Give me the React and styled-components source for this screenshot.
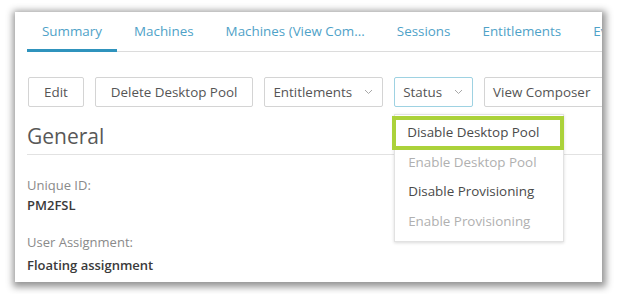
import styled, { createGlobalStyle } from 'styled-components';

const Global = createGlobalStyle`
  html, body {
    margin: 0;
    padding: 0;
    background: #ffffff;
    font-family: "Open Sans", "Noto Sans", sans-serif;
  }
`;

const Stage = styled.div`
  width: 618px;
  height: 294px;
  padding: 12px 16px 12px 15px;
  box-sizing: border-box;
`;

const Panel = styled.div`
  position: relative;
  height: 270px;
  background: #fff;
  overflow: hidden;
  box-shadow: 1px 2px 7px 3px rgba(0, 0, 0, 0.42);
  padding-left: 12px;
`;

const TabBar = styled.div`
  display: flex;
  gap: 2px;
  margin-top: 6px;
  border-bottom: 1px solid #dcdcdc;
  white-space: nowrap;
`;

const Tab = styled.div`
  flex: none;
  padding: 4px 15px 9px 15px;
  font-size: 13.4px;
  color: #4fa2c8;
  border-bottom: 3px solid ${(p) => (p.$active ? '#2f93bd' : 'transparent')};
  margin-bottom: -1px;
`;

const Toolbar = styled.div`
  display: flex;
  gap: 11px;
  margin-top: 25px;
  padding-left: 1px;
  white-space: nowrap;
`;

const Button = styled.div`
  flex: none;
  display: flex;
  align-items: center;
  gap: 12px;
  height: 30px;
  box-sizing: border-box;
  padding: 0 ${(p) => (p.$chevron ? '9px' : '15px')} 0 ${(p) => (p.$chevron ? '8px' : '15px')};
  border: 1px solid ${(p) => (p.$open ? '#9ed2e2' : '#d4d4d4')};
  border-radius: 2px;
  font-size: 13.4px;
  color: #555555;
  background: #fff;
`;

const DropWrap = styled.div`
  position: relative;
  flex: none;
`;

const Menu = styled.div`
  position: absolute;
  left: 0;
  top: 37px;
  width: 168px;
  padding: 3px 0 5px;
  background: #fff;
  border: 1px solid #e2e2e2;
  box-shadow: 0 1px 3px rgba(0, 0, 0, 0.15);
  z-index: 2;
`;

const MenuItem = styled.div`
  position: relative;
  height: 29.5px;
  line-height: 29.5px;
  padding-left: 13px;
  font-size: 13.4px;
  color: ${(p) => (p.$disabled ? '#b0b0b0' : '#4a4a4a')};
  outline: ${(p) => (p.$highlight ? '4px solid #abd23a' : 'none')};
  outline-offset: -2px;
  margin-left: ${(p) => (p.$highlight ? '-1px' : '0')};
  margin-right: ${(p) => (p.$highlight ? '1px' : '0')};
`;

const Heading = styled.h2`
  margin: 15px 0 0;
  padding-bottom: 4px;
  font-size: 21px;
  font-weight: 400;
  color: #585858;
  border-bottom: 1px solid #e2e2e2;
`;

const Field = styled.div`
  margin-top: ${(p) => p.$gap || '20px'};
`;

const Label = styled.div`
  font-size: 13px;
  color: #8a8a8a;
  line-height: 18px;
`;

const Value = styled.div`
  margin-top: ${(p) => p.$gap || '3px'};
  font-size: 13px;
  font-weight: 600;
  color: #3a3a3a;
  line-height: 18px;
`;

const Chevron = () => (
  <svg width="9" height="6" viewBox="0 0 9 6">
    <path d="M1 1l3.5 3.5L8 1" fill="none" stroke="#a8a8a8" strokeWidth="1" />
  </svg>
);

const tabs = ['Summary', 'Machines', 'Machines (View Com...', 'Sessions', 'Entitlements', 'Events'];

const menuItems = [
  { label: 'Disable Desktop Pool', highlight: true },
  { label: 'Enable Desktop Pool', disabled: true },
  { label: 'Disable Provisioning' },
  { label: 'Enable Provisioning', disabled: true },
];

export default function App() {
  return (
    <>
      <Global />
      <Stage>
        <Panel>
          <TabBar>
            {tabs.map((t, i) => (
              <Tab key={t} $active={i === 0}>
                {t}
              </Tab>
            ))}
          </TabBar>

          <Toolbar>
            <Button>Edit</Button>
            <Button>Delete Desktop Pool</Button>
            <Button $chevron>
              Entitlements <Chevron />
            </Button>
            <DropWrap>
              <Button $chevron $open>
                Status <Chevron />
              </Button>
              <Menu>
                {menuItems.map((m) => (
                  <MenuItem key={m.label} $disabled={m.disabled} $highlight={m.highlight}>
                    {m.label}
                  </MenuItem>
                ))}
              </Menu>
            </DropWrap>
            <Button $chevron>
              View Composer <Chevron />
            </Button>
          </Toolbar>

          <Heading>General</Heading>

          <Field $gap="21px">
            <Label>Unique ID:</Label>
            <Value $gap="2px">PM2FSL</Value>
          </Field>
          <Field $gap="19px">
            <Label>User Assignment:</Label>
            <Value $gap="5px">Floating assignment</Value>
          </Field>
        </Panel>
      </Stage>
    </>
  );
}
